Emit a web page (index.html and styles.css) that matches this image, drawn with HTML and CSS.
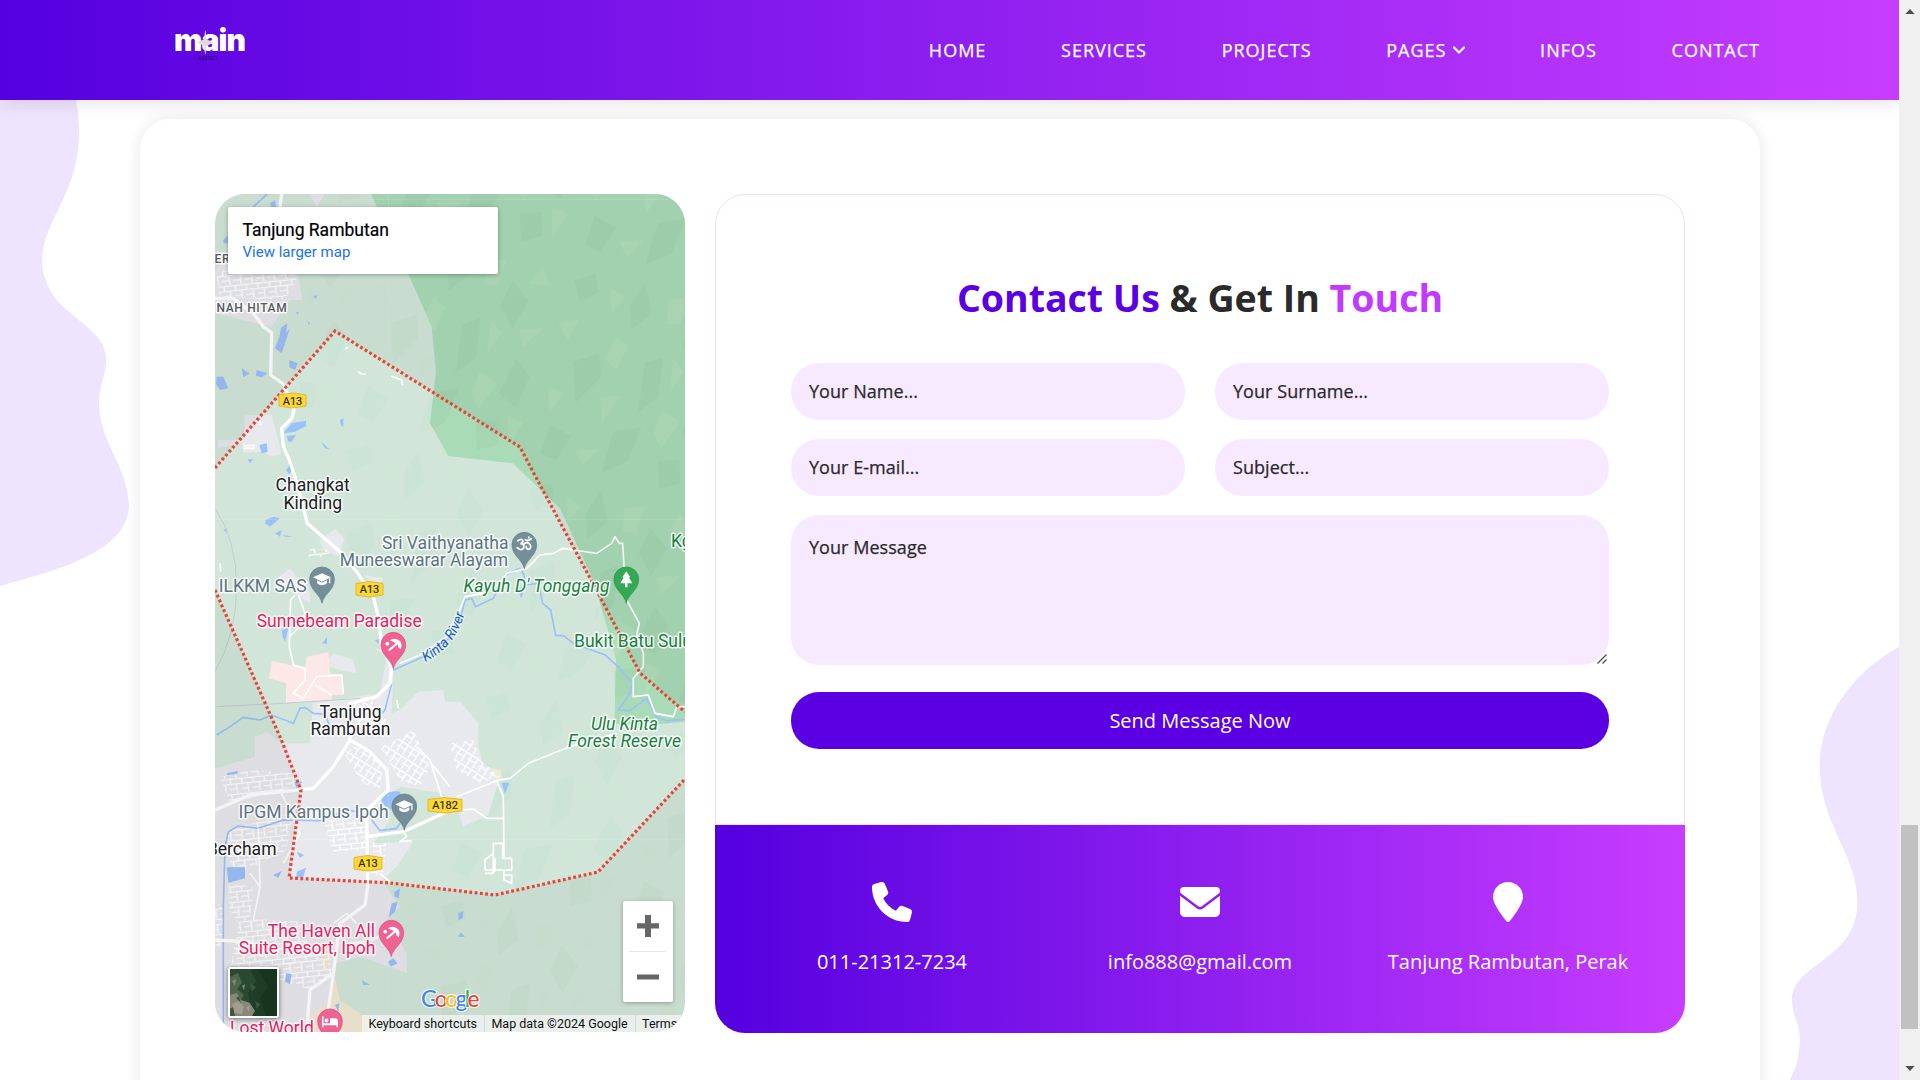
FILE: index.html
```html
<!DOCTYPE html>
<html lang="en">
<head>
<meta charset="utf-8">
<title>Main Agency - Contact</title>
<link rel="stylesheet" href="styles.css">
</head>
<body>
<div class="page">
  <svg class="blob blob-left" viewBox="0 0 140 500" aria-hidden="true"><path d="M0 0H76C80 22 80 42 76 62C68 102 42 128 42 162C45 208 84 216 101 242C114 264 98 282 99 304C101 346 127 364 129 406C127 452 58 470 0 486Z"/></svg>
  <svg class="blob blob-right" viewBox="0 0 109 433" aria-hidden="true"><path d="M109 0C68 22 30 66 29.600 119C30 178 67 206 67.500 256C66 314 2 316 2 353C3 378 15 374 7 416L0 433H110V0Z"/></svg>

  <header class="header">
    <svg class="logo" viewBox="0 0 76 44" role="img" aria-label="main agency">
      <text class="logo-word" x="2" y="29" textLength="72">main</text>
      <path class="logo-star" d="M33 8.500L33.700 9L34.200 17L41 20.500L34.200 24L33.600 32L33 32L32.200 24L25 20.500L32.200 17Z"/>
      <text class="logo-sub" x="26" y="37.500" textLength="20">AGENCY</text>
    </svg>
    <nav class="nav">
      <a>HOME</a>
      <a>SERVICES</a>
      <a>PROJECTS</a>
      <a class="has-menu">PAGES<svg class="chevron" viewBox="1 0 12 10"><path d="M2 2.500L7 7.500L12 2.500"/></svg></a>
      <a>INFOS</a>
      <a>CONTACT</a>
    </nav>
  </header>

  <main class="card">
    <section class="map">
      <svg class="map-canvas" viewBox="215 194 470 838">
        <defs>
          <pattern id="terrain" width="560" height="640" patternUnits="userSpaceOnUse" patternTransform="rotate(12)">
            <path class="shade-dark" d="M40 60l60-30 20 50-50 40zM250 20l40 90-50 60-20-70zM420 100l60 50-30 90-50-60zM90 300l70-40 20 70-60 90zM300 260l50-30 10 120-50 60zM480 330l50 40-20 100-60-30zM60 500l70 20-30 80-50-10zM250 480l80-30-20 110-70 50zM400 540l60-20 20 70-60 30z"/>
            <path class="shade-light" d="M150 60l50 20-30 50zM330 60l60-20-10 80-40 10zM500 40l30 50-60 10zM20 200l60-30-20 70zM200 200l40 20-20 80-40-30zM380 230l40 30-30 70zM470 240l70-20-50 70zM30 390l50 10-30 60zM190 390l60-20-40 90zM380 390l60 20-40 90-30-40zM150 560l70-20-40 60zM490 500l50 10-30 80z"/>
          </pattern>
          <pattern id="streets" width="34" height="46" patternUnits="userSpaceOnUse" patternTransform="rotate(-6)">
            <path class="street" d="M0 4H34M0 19H34M4 4V19M22 19V46M0 34H22"/>
          </pattern>
          <pattern id="streets-slant" width="40" height="38" patternUnits="userSpaceOnUse" patternTransform="rotate(32)">
            <path class="street" d="M0 5H40M0 21H28M8 5V38M28 5V38"/>
          </pattern>
          <g id="pin"><path d="M0 24C-1.500 15-12.400 11-12.400 0A12.400 12.400 0 1 1 12.400 0C12.400 11 1.500 15 0 24Z"/></g>
          <g id="cap"><path d="M0-6L9-2L0 2.500L-9-2Z"/><path d="M-5 1L0 3.500L5 1V4Q0 8-5 4Z"/><path d="M7-1H8.300V4H7Z"/></g>
          <g id="umbrella"><circle cx="-6" cy="-1" r="1.900"/><path d="M-3.500-4.500Q2-8 7-3.500Q9 0 7.500 4.500L5 2.500L4.500-.500L-4 6.500L-5.300 5L2.500-1.800L0-3Z"/></g>
        </defs>

        <rect class="land" x="215" y="194" width="470" height="838"/>
        <g transform="translate(200 180) scale(.33333)">
          <path class="forest" d="M513 42L625 282L695 440L708 575L690 730L745 828L938 850L1080 985L1180 1200L1235 1390L1248 1440L1243 1632H1380L1455 1625V42Z"/>
          <path class="terrain-strong" d="M513 42L625 282L695 440L708 575L690 730L745 828L938 850L1080 985L1180 1200L1235 1390L1243 1632H1455V42Z"/>
          <path class="terrain-soft" d="M300 42H513L625 282L695 440L708 575L690 730L745 828L938 850L1080 985L1180 1200L1243 1632H1455V2556H560L640 1990L870 1900L830 1600L600 1480L560 1250L300 900Z"/>

          <path class="urban" d="M655 1535L730 1530L735 1565H780L835 1630L835 1700L850 1755L905 1775L865 1905L790 1940L770 1880L730 1840L600 1820L545 1860L570 1920L520 1990L640 1985L590 2060L545 2100L600 2180L560 2220L620 2320V2380L480 2330L410 2350L390 2480L330 2556H45V1765L165 1730L165 1670L200 1655L245 1690H330L340 1570L540 1540L560 1430L520 1400L560 1420L580 1470L575 1600L600 1590Z"/>
          <path class="urban" d="M45 270L90 230H260L295 290L307 360H270L215 440L150 425L45 400ZM330 42H375L350 80ZM135 705H215L245 820L215 830L190 815L130 818L128 790L55 805V780H130ZM358 1080L405 1047L433 1075L415 1130L370 1110ZM225 1200L270 1165L310 1215L330 1240L330 1270L290 1245ZM370 1455L400 1420L460 1440L468 1480L420 1470ZM495 1185L550 1195L530 1240Z"/>
          <path class="hospital" d="M215 1443L315 1465L320 1430L385 1417L390 1480L425 1485L432 1545H395V1562L258 1568V1510L207 1495Z"/>
          <path class="sand" d="M400 2370L420 2460L560 2520V2556H320L340 2500L385 2470ZM880 1770L900 1768L908 1798L890 1800ZM370 2300H400L390 2360L365 2370Z"/>
          <path class="green-patch" d="M45 1680H165L160 1730L45 1765ZM410 2350L480 2330L620 2380L700 2556H560L420 2460Z"/>

          <g class="blocks">
            <path d="M50 290L95 250H260L290 300L255 360L60 355Z"/>
            <path d="M60 1790L160 1770L280 1780L285 1820L90 1870Z"/>
            <path d="M80 1950L280 1900L260 2010L120 2080L90 2050Z"/>
            <path d="M85 2110L160 2120L150 2220L90 2210ZM45 2180H70V2300H45ZM120 2215L300 2225L340 2330L230 2370H90Z"/>
            <path d="M250 2330L390 2300L395 2390L330 2430L240 2400Z"/>
            <path d="M370 1920H500V2010L400 2015ZM520 1985L560 1990L550 2090L510 2080Z"/>
            <path d="M330 1105L390 1110L385 1130L325 1130Z"/>
          </g>
          <g class="blocks-slant">
            <path d="M570 1690L640 1650L690 1760L660 1820L600 1800L540 1700Z"/>
            <path d="M430 1720L480 1690L550 1750L540 1830L490 1810Z"/>
            <path d="M750 1690L820 1680L840 1740L900 1790L840 1810L770 1770Z"/>
            <path d="M460 1570L530 1565L520 1600L560 1620L550 1670L470 1640Z"/>
          </g>

          <path class="water" d="M243 443L262 430L258 460L270 445L255 490L245 520L225 505L238 470ZM268 540L293 550L285 570L268 562ZM50 590L70 590L85 625L60 630L48 612ZM125 565L140 575L150 580L130 592ZM170 570L203 580L185 592L168 588ZM275 730L318 722V738L285 755L250 760ZM260 768L288 765L275 785H265ZM178 795L200 790L203 815L185 820ZM420 720L430 715V740L423 738ZM338 350L352 345L348 356ZM143 838H160L150 850ZM362 783L388 808L375 805ZM210 70L225 60L228 82H215ZM70 180L85 165V190H70ZM288 397L297 395L292 404ZM322 424L330 430L327 436Z"/>
          <path class="water" d="M258 870L270 855L277 870L268 882ZM197 1020L220 1010L240 1015L210 1040L195 1030ZM225 1060L245 1050L240 1070ZM250 1065L280 1070L255 1070ZM70 1048L82 1045L78 1058ZM245 1350L265 1345L255 1385L248 1370ZM367 1390L382 1370L380 1392ZM525 1380L540 1378L535 1392ZM950 1230L975 1215L965 1255ZM545 1850Q570 1830 600 1835L610 1870L570 1888L545 1870ZM905 1808H928L915 1842ZM283 1805H308L290 1825ZM80 2062H135V2095L85 2108ZM220 2085L245 2073L235 2093ZM290 2075L318 2063L310 2090L290 2095ZM290 2015L312 2025L300 2033ZM583 2135L600 2125L597 2155L583 2150ZM575 2170L593 2165L585 2195L565 2213ZM775 2200L790 2193L788 2215L776 2220ZM782 2257L795 2270H775ZM563 2345L580 2335L593 2350L573 2360ZM258 2380L275 2382L270 2412L255 2405ZM485 2400L510 2415H490ZM405 2475L418 2470L415 2495ZM80 1780L113 1773L112 1782L82 1785Z"/>
          <path class="river" d="M160 80L215 30M50 1665L90 1640L130 1612L180 1620L215 1605L280 1630L300 1585L315 1582L340 1600L375 1603L390 1640M575 1472L670 1430L755 1370L780 1320L795 1260L815 1255L827 1280L880 1255L915 1185L960 1165L972 1185L975 1215L1015 1210L1028 1270L1052 1290L1067 1367H1090L1120 1390L1215 1425L1260 1465L1297 1510L1290 1540L1255 1590L1290 1592L1340 1555L1368 1610L1400 1622L1455 1618M575 1510L555 1590L545 1600M70 2556V2180L75 2000L85 1955L115 1938L175 1945L250 1920L360 1922L440 1890L470 1895M515 1920L540 1952L590 1945L600 1930"/>

          <path class="rail" d="M45 985Q110 1080 110 1220T45 1475M50 1580L250 1570L480 1555"/>
          <path class="road-minor" d="M285 1245L272 1260L268 1400L280 1455L315 1465M295 1245L315 1300L300 1340L268 1370M315 1465L315 1500L280 1540L310 1555L350 1490L425 1485L430 1540M345 1515L395 1545M600 1450L660 1425L740 1370L775 1300L795 1250L850 1240L900 1210L920 1180L980 1165L1020 1125L1060 1120L1090 1105L1120 1110L1190 1120L1235 1090L1245 1070L1258 1090H1268L1272 1160L1285 1200L1280 1260L1318 1330L1310 1365L1330 1420L1330 1460L1300 1495L1300 1550L1345 1545L1365 1600L1420 1610L1430 1580H1455M740 1895L820 1887L860 1915H910M770 1850L890 1802L930 1795L985 1750L1060 1720L1110 1700L1250 1660M890 1802L910 1850L912 2030M880 1990H908V2035H935V2070H855V2040L880 2020ZM880 2020V2080H855M885 2035V2075M912 2070V2100L935 2110V2085H912M610 1955L620 1970L600 1985L635 1982M470 690M437 508L443 501M473 574L485 582L497 583M573 588L605 600L608 616M180 720L182 735M130 797H165M130 805H165M590 1560L595 1585M60 1150L62 1175M150 2080L180 2120M650 1700L690 1740L725 1850L770 1860L760 1900M240 1830L300 1960L250 2050M175 1945L180 2120L160 2220M400 2230L440 2200L470 2230M540 2080L580 2115M450 2290L520 2280L560 2250M690 1745L750 1820"/>
          <path class="road" d="M245 42L240 80M45 355L100 355L160 400L190 440L215 458L212 585L250 612L282 690L275 715L245 745L250 800L268 840L290 905L322 1030L420 1115L470 1175L520 1250L537 1320L545 1400L575 1460L570 1510L530 1550L450 1570V1680L510 1715L560 1770L565 1830L500 1890L503 2120L495 2175L420 2230L400 2380L385 2490M450 1680L400 1760L340 1825L150 1845L45 1890M45 2280L150 2285M500 1970L610 1955L740 1895M400 2380L330 2430L320 2556"/>
          <path class="tile-line" d="M566 42V560M566 1260V2480M45 58H1455M45 1018H1455M45 1978H1455"/>
        </g>

        <path class="outside" d="M215 194H685V712L640 673L598 593L528 463L520 447L335 331L215 468ZM215 590L281 739L301 790L289 878L387 882.700L495 895L598 872L685 779V1032H215Z"/>
        <path class="boundary" d="M215 468L335 331L520 447L532 470L598 593L640 673L685 712M215 590L281 739L301 790L289 878L387 882.700L495 895L598 872L685 779"/>

        <g class="labels">
          <g class="area"><text x="214.500" y="263">ER</text><text x="216.500" y="311.500" textLength="71">NAH HITAM</text></g>
          <g class="town middle">
            <text x="312.700" y="491">Changkat</text><text x="312.700" y="508.500">Kinding</text>
            <text x="350.500" y="717.700">Tanjung</text><text x="350.500" y="735.300">Rambutan</text>
          </g>
          <text class="town end" x="276.500" y="855.400">Bercham</text>
          <g class="poi end">
            <text x="508.500" y="548.500">Sri Vaithyanatha</text><text x="508" y="566.300">Muneeswarar Alayam</text>
            <text x="306.700" y="591.700">ILKKM SAS</text><text x="388.700" y="818.400">IPGM Kampus Ipoh</text>
          </g>
          <g class="park">
            <text class="slanted" x="463.500" y="591.700" textLength="146">Kayuh D' Tonggang</text>
            <text x="574" y="646.500">Bukit Batu Suluh</text><text x="671" y="546.700">Kg</text>
            <text class="slanted" x="591" y="729.700" textLength="67">Ulu Kinta</text>
            <text class="slanted" x="568" y="747.300" textLength="113">Forest Reserve</text>
          </g>
          <g class="hotel end">
            <text x="421.700" y="627.300">Sunnebeam Paradise</text>
            <text x="375" y="937">The Haven All</text><text x="375.500" y="954">Suite Resort, Ipoh</text>
            <text x="313.800" y="1033.500">Lost World</text>
          </g>
          <path id="river-line" fill="none" d="M425 662Q458 646 466 607"/>
          <text class="river-name"><textPath href="#river-line">Kinta River</textPath></text>
        </g>

        <g class="shields">
          <path d="M279 395L292.500 393L306 395V406L292.500 408L279 406ZM356 583.500L369.500 581.500L383 583.500V595L369.500 597L356 595ZM428 799.500L445 797.500L462 799.500V811L445 813L428 811ZM354 857.500L368 855.500L382 857.500V869L368 871L354 869Z"/>
          <text x="292.500" y="404.500">A13</text><text x="369.500" y="593">A13</text><text x="445" y="809.200">A182</text><text x="368" y="867.300">A13</text>
        </g>

        <g class="pins">
          <g transform="translate(524.300 544.700)"><use href="#pin" class="pin-gray"/><path class="om" d="M-6.500-4Q-2-7-1.500-3.500Q-2-1-4-1Q0-1-.500 3Q-3 7-7 3M-1 0Q2-3 4.500-1.500Q8 2 5 4.500Q2 5 2 2M1-5Q4-3 7-6M4.500-7.500V-7"/></g>
          <g transform="translate(322 579.300)"><use href="#pin" class="pin-gray"/><use href="#cap"/></g>
          <g transform="translate(404.300 806.300)"><use href="#pin" class="pin-gray"/><use href="#cap"/></g>
          <g transform="translate(626.300 579.300)"><use href="#pin" class="pin-green"/><path d="M0-8L4-2H2.500L6 4H1.200V8H-1.200V4H-6L-2.500-2H-4Z"/></g>
          <g transform="translate(393.300 644.700)"><use href="#pin" class="pin-pink"/><use href="#umbrella"/></g>
          <g transform="translate(391.300 932.700)"><use href="#pin" class="pin-pink"/><use href="#umbrella"/></g>
          <g transform="translate(330 1021.300)"><use href="#pin" class="pin-pink"/><path d="M-8-5H-6.500V2H0V-3H5Q8-3 8 0V6H6.500V4H-6.500V6H-8Z"/><circle cx="-3.500" cy="-.800" r="1.900"/></g>
        </g>
        <text class="google" x="421" y="1006.500" textLength="58.500"><tspan class="g-blue">G</tspan><tspan class="g-red">o</tspan><tspan class="g-yellow">o</tspan><tspan class="g-blue">g</tspan><tspan class="g-green">l</tspan><tspan class="g-red">e</tspan></text>
      </svg>

      <div class="place-card">
        <div class="place-name">Tanjung Rambutan</div>
        <a class="place-link">View larger map</a>
      </div>
      <div class="satellite">
        <svg viewBox="0 0 47 47" preserveAspectRatio="none">
          <rect width="47" height="47" fill="#1d3d26"/>
          <path fill="#2a4a30" d="M0 0H20L26 12L18 24L22 47H0Z"/>
          <path fill="#17341f" d="M28 0H47V47H36L30 30L38 18Z"/>
          <path fill="#4f6650" d="M0 8L8 4L12 14L7 20L14 26L10 32L0 28Z"/>
          <path fill="#87877a" d="M0 26L7 24L11 31L20 34L25 42L22 47H0ZM2 12L6 10L5 17ZM12 17L15 15L14 21Z"/>
          <path fill="#a59c90" d="M2 35L9 32L14 38L12 45L4 44ZM16 38L20 37L19 43Z"/>
          <path fill="#3e583e" d="M20 14L26 18L22 23ZM25 32L30 35L27 40ZM6 29L9 27L11 34ZM0 40L3 38L5 47H0Z"/>
        </svg>
      </div>
      <div class="zoom-control">
        <svg viewBox="0 0 50 50"><path d="M14 22.200H22V14H28V22.200H36V27.400H28V36H22V27.400H14Z"/></svg>
        <svg viewBox="0 0 50 50"><path d="M14 23.500H36V28.500H14Z"/></svg>
      </div>
      <div class="attribution"><span>Keyboard shortcuts</span><span>Map data ©2024 Google</span><span class="terms">Terms</span></div>
    </section>

    <section class="contact">
      <form class="contact-form">
        <h2 class="title"><em>Contact Us</em> &amp; Get In <span>Touch</span></h2>
        <div class="fields">
          <input class="field" type="text" placeholder="Your Name...">
          <input class="field" type="text" placeholder="Your Surname...">
          <input class="field" type="text" placeholder="Your E-mail...">
          <input class="field" type="text" placeholder="Subject...">
          <div class="message-wrap">
            <textarea class="field message" placeholder="Your Message"></textarea>
            <svg class="grip" viewBox="0 0 10 10"><path d="M.500 9.500L9.500 .500M5.500 9.500L9.500 5.500"/></svg>
          </div>
        </div>
        <button class="submit" type="button">Send Message Now</button>
      </form>
      <footer class="details">
        <div class="detail">
          <svg viewBox="0 0 512 512"><path d="M164.900 24.600c-7.700-18.600-28-28.500-47.400-23.200l-88 24C12.100 30.200 0 46 0 64C0 311.400 200.600 512 448 512c18 0 33.800-12.100 38.600-29.500l24-88c5.300-19.400-4.600-39.700-23.200-47.400l-96-40c-16.300-6.800-35.200-2.100-46.300 11.600L304.700 368C234.300 334.700 177.300 277.700 144 207.300L193.300 167c13.700-11.200 18.400-30 11.600-46.300l-40-96z"/></svg>
          <span>011-21312-7234</span>
        </div>
        <div class="detail">
          <svg viewBox="0 0 512 512"><path d="M48 64C21.500 64 0 85.500 0 112c0 15.100 7.100 29.300 19.200 38.400L236.800 313.600c11.400 8.500 27 8.500 38.400 0L492.800 150.400c12.100-9.100 19.200-23.300 19.200-38.400c0-26.500-21.500-48-48-48H48zM0 176V384c0 35.300 28.700 64 64 64H448c35.300 0 64-28.700 64-64V176L294.400 339.200c-22.800 17.100-54 17.100-76.800 0L0 176z"/></svg>
          <span>info888@gmail.com</span>
        </div>
        <div class="detail">
          <svg viewBox="0 0 384 512"><path d="M384 192c0 87.400-117 243-168.300 307.200c-12.300 15.300-35.100 15.300-47.400 0C117 435 0 279.400 0 192C0 86 86 0 192 0S384 86 384 192z"/></svg>
          <span>Tanjung Rambutan, Perak</span>
        </div>
      </footer>
    </section>
  </main>
</div>
<aside class="scrollbar">
  <svg class="arrow" viewBox="0 0 11 6"><path d="M0 6L5.500 0L11 6Z"/></svg>
  <div class="thumb"></div>
  <svg class="arrow arrow-down" viewBox="0 0 11 6"><path d="M0 0H11L5.500 6Z"/></svg>
</aside>
</body>
</html>
```
FILE: styles.css
```css
* { box-sizing: border-box; }
body {
  margin: 0;
  width: 1920px;
  height: 1080px;
  overflow: hidden;
  display: flex;
  background: #fff;
  font-family: "Open Sans", sans-serif;
  color: #2a2a2a;
}
.page {
  position: relative;
  width: 1899px;
  height: 1080px;
  overflow: hidden;
  background: #fff;
}
.blob { position: absolute; fill: #eee4fd; }
.blob-left { left: 0; top: 100px; width: 140px; height: 500px; }
.blob-right { right: 0; bottom: 0; width: 109px; height: 433px; }

/* Header */
.header {
  position: relative;
  z-index: 2;
  height: 100px;
  padding: 0 139px 0 172px;
  display: flex;
  justify-content: space-between;
  background: linear-gradient(90deg, #5400df 0%, #c73dff 100%);
  box-shadow: 0 0 20px rgba(0, 0, 0, .15);
}
.logo { width: 76px; height: 44px; margin-top: 22px; overflow: visible; }
.logo-word { font: 900 30px Inter, sans-serif; fill: #fff; }
.logo-star { fill: #dedbdc; }
.logo-sub { font: 5px "Open Sans", sans-serif; fill: #1b1150; }
.nav {
  display: flex;
  gap: 74.7px;
  align-items: center;
  color: #fff;
  font-size: 18px;
  letter-spacing: 1px;
  -webkit-text-stroke: .25px #fff;
}
.has-menu { display: flex; align-items: center; gap: 7px; }
.chevron { width: 12px; height: 10px; overflow: visible; fill: none; stroke: #fff; stroke-width: 2.2; stroke-linecap: round; stroke-linejoin: round; }

/* Card */
.card {
  position: relative;
  width: 1620px;
  height: 1020px;
  margin: 19px 0 0 140px;
  padding: 75px;
  display: grid;
  grid-template-columns: 470px 970px;
  gap: 30px;
  align-items: start;
  border-radius: 30px;
  background: #fff;
  box-shadow: 0 0 15px rgba(0, 0, 0, .1);
}

/* Map */
.map {
  position: relative;
  height: 838px;
  border-radius: 30px;
  overflow: hidden;
  font-family: Roboto, sans-serif;
}
.map-canvas { display: block; width: 470px; height: 838px; }
.land { fill: #d1e6d9; }
.forest { fill: #aadbb7; }
.terrain-strong { fill: url(#terrain); opacity: .4; }
.terrain-soft { fill: url(#terrain); opacity: .12; }
.shade-dark { fill: #8fc4a3; fill-opacity: .6; }
.shade-light { fill: #c2e6c6; fill-opacity: .7; }
.urban { fill: #e8e9ed; }
.hospital { fill: #fce8e6; }
.sand { fill: #f3e8d3; }
.green-patch { fill: #d1e6d9; }
.street { fill: none; stroke: #fff; stroke-width: 4; }
.blocks path { fill: url(#streets); }
.blocks-slant path { fill: url(#streets-slant); }
.water { fill: #9cc0f9; }
.river { fill: none; stroke: #9cc0f9; stroke-width: 5; stroke-linejoin: round; }
.rail { fill: none; stroke: #c3ccd0; stroke-width: 3; }
.road-minor { fill: none; stroke: #fff; stroke-width: 5; stroke-linejoin: round; }
.road { fill: none; stroke: #fff; stroke-width: 10; stroke-linejoin: round; }
.tile-line { fill: none; stroke: #fff; stroke-opacity: .25; stroke-width: 2; }
.outside { fill: #000; fill-opacity: .045; }
.boundary { fill: none; stroke: #ea4335; stroke-width: 3.2; stroke-dasharray: 2.8 2.5; }
.labels text { stroke: rgba(255, 255, 255, .85); stroke-width: 3px; stroke-linejoin: round; paint-order: stroke; font-size: 17.5px; }
.labels .area text { font-size: 12px; font-weight: 500; fill: #555b61; letter-spacing: .8px; }
.middle { text-anchor: middle; }
.end { text-anchor: end; }
.town { fill: #202124; }
.poi { fill: #5b7482; }
.park { fill: #188040; }
.hotel { fill: #e8205f; }
.slanted { font-style: italic; }
.labels .river-name { font-size: 14px; font-style: italic; fill: #185abc; stroke-opacity: .5; }
.shields path { fill: #fdd835; stroke: #e5b52c; stroke-width: 1; }
.shields text { font-size: 11px; text-anchor: middle; fill: #2c2a18; stroke: #2c2a18; stroke-width: .2px; }
.pins { fill: #fff; }
.pin-gray { fill: #748e9a; stroke: #607985; stroke-width: .6; }
.pin-green { fill: #34a853; stroke: #1e8e3e; stroke-width: .6; }
.pin-pink { fill: #f06292; stroke: #dd4479; stroke-width: .6; }
.om { fill: none; stroke: #fff; stroke-width: 1.8; stroke-linecap: round; }
.google { font: 500 22.500px Lato, sans-serif; stroke: #fff; stroke-width: 2px; paint-order: stroke; }
.g-blue { fill: #4285f4; }
.g-red { fill: #ea4335; }
.g-yellow { fill: #fbbc04; }
.g-green { fill: #34a853; }
.place-card {
  position: absolute;
  left: 13px;
  top: 13px;
  width: 270px;
  height: 67px;
  padding: 12px 14.5px;
  background: #fff;
  border-radius: 2px;
  box-shadow: 0 1px 4px rgba(0, 0, 0, .3);
}
.place-name { font-size: 17.5px; line-height: 22px; color: #000; -webkit-text-stroke: .2px #000; }
.place-link { display: block; margin-top: 1px; font-size: 15px; line-height: 20px; color: #1a73e8; }
.satellite {
  position: absolute;
  left: 13px;
  top: 773px;
  width: 51px;
  height: 51px;
  border: 2px solid #fff;
  border-radius: 3px;
  box-shadow: 0 1px 5px rgba(0, 0, 0, .5);
}
.satellite svg { display: block; width: 47px; height: 47px; }
.zoom-control {
  position: absolute;
  left: 408px;
  top: 707px;
  width: 50px;
  height: 101px;
  background: #fff;
  border-radius: 2px;
  box-shadow: 0 1px 4px rgba(0, 0, 0, .3);
}
.zoom-control svg { display: block; width: 50px; height: 50px; fill: #666; }
.zoom-control svg + svg { background: linear-gradient(#e6e6e6, #e6e6e6) 6px 0 / 37px 1px no-repeat; }
.attribution {
  position: absolute;
  left: 147px;
  right: 0;
  bottom: 0;
  height: 17px;
  display: flex;
  gap: 1px;
  font-size: 12.5px;
  line-height: 17px;
  white-space: nowrap;
  color: #111;
}
.attribution span { padding: 0 7px 0 6.5px; background: rgba(245, 245, 245, .75); }
.attribution .terms { flex: 1; }

/* Contact form */
.contact-form {
  height: 631px;
  padding: 75px 75px 0;
  border: 1px solid #f3d9ff;
  border-radius: 30px 30px 0 0;
}
.title { margin: 0 0 38px; font-size: 37.5px; line-height: 55px; font-weight: 700; text-align: center; white-space: nowrap; }
.title em { font-style: normal; color: #5a00e3; }
.title span { color: #c23aff; }
.fields { display: grid; grid-template-columns: 1fr 1fr; gap: 19px 30px; }
.field {
  height: 57px;
  width: 100%;
  padding: 0 18px 1px;
  border: 0;
  border-radius: 28px;
  background: #f7e9ff;
  font: 18px "Open Sans", sans-serif;
  letter-spacing: .05px;
  color: #2a2a2a;
  -webkit-text-stroke: .25px #2a2a2a;
}
.field::placeholder { color: #2a2a2a; opacity: 1; }
.message-wrap { position: relative; grid-column: 1 / -1; }
.message { display: block; height: 150px; padding: 20px 18px; resize: none; }
.grip { position: absolute; right: 2px; bottom: 1px; width: 10px; height: 10px; fill: none; stroke: #505050; stroke-width: 1.4; }
.submit {
  display: block;
  width: 100%;
  height: 57px;
  margin-top: 27px;
  padding: 0;
  border: 0;
  border-radius: 28px;
  background: #5a00e3;
  color: #fff;
  font: 20px "Open Sans", sans-serif;
}
.details {
  height: 208px;
  padding: 57px 23px 0;
  display: grid;
  grid-template-columns: repeat(3, 1fr);
  border-radius: 0 0 30px 30px;
  background: linear-gradient(90deg, #5400df 0%, #c73dff 100%);
  color: #fff;
  font-size: 20px;
}
.detail { display: flex; flex-direction: column; align-items: center; gap: 26px; line-height: 28px; }
.detail svg { height: 40px; fill: #fff; }

/* Scrollbar */
.scrollbar {
  width: 21px;
  height: 1080px;
  padding: 9px 2px;
  display: flex;
  flex-direction: column;
  align-items: center;
  background: #f0f0f0;
}
.arrow { width: 10px; height: 5px; fill: #505050; }
.thumb { width: 17px; height: 204px; margin: 811px 0 auto; background: #c1c1c1; }
```
